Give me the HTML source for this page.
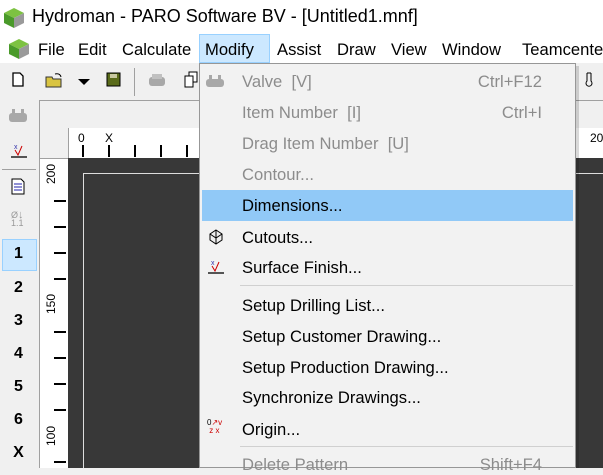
<!DOCTYPE html>
<html><head><style>
*{margin:0;padding:0;box-sizing:border-box}
body{width:603px;height:468px;overflow:hidden;background:#f0f0f0;font-family:"Liberation Sans",sans-serif;position:relative}
.a{position:absolute}
.t{font-size:16.6px;color:#000;white-space:nowrap}
.mi{position:absolute;left:242px;font-size:16.6px;white-space:nowrap}
.g{color:#8c8c8c}
.sc{position:absolute;right:61px;font-size:16.6px;color:#8c8c8c}
.n{position:absolute;left:0;width:37px;text-align:center;font-weight:bold;font-size:16px}
.tk{position:absolute;width:2px;height:12px;background:#000;top:145px}
.vt{position:absolute;left:54px;width:12px;height:1.5px;background:#000}
</style></head><body>
<div class="a" style="left:0;top:0;width:603px;height:34px;background:#fff"></div>
<svg class="a" style="left:3px;top:7px" width="22" height="22" viewBox="0 0 22 22"><polygon points="11,1 21,6 11,11 1,6" fill="#7dc242"/><polygon points="1,6 11,11 11,21 1,16" fill="#4a9a2a"/><polygon points="21,6 11,11 11,21 21,16" fill="#9a9a9a"/></svg>
<div class="a t" style="left:32px;top:6px;font-size:18px">Hydroman - PARO Software BV - [Untitled1.mnf]</div>
<div class="a" style="left:0;top:34px;width:603px;height:29px;background:#fff"></div>
<svg class="a" style="left:8px;top:38px" width="22" height="22" viewBox="0 0 22 22"><polygon points="11,1 21,6 11,11 1,6" fill="#7dc242"/><polygon points="1,6 11,11 11,21 1,16" fill="#4a9a2a"/><polygon points="21,6 11,11 11,21 21,16" fill="#9a9a9a"/></svg>
<div class="a" style="left:199px;top:34px;width:71px;height:29px;background:#cce8ff;border:1px solid #99d1ff"></div>
<div class="a t" style="left:38px;top:40px">File</div>
<div class="a t" style="left:78px;top:40px">Edit</div>
<div class="a t" style="left:122px;top:40px">Calculate</div>
<div class="a t" style="left:205px;top:40px">Modify</div>
<div class="a t" style="left:277px;top:40px">Assist</div>
<div class="a t" style="left:337px;top:40px">Draw</div>
<div class="a t" style="left:391px;top:40px">View</div>
<div class="a t" style="left:442px;top:40px">Window</div>
<div class="a t" style="left:522px;top:40px">Teamcenter</div>
<!-- toolbar -->
<svg class="a" style="left:12px;top:72px" width="12" height="15"><path d="M1 1h7l3 3v10H1z" fill="#fff" stroke="#000" stroke-width="1.3"/></svg>
<svg class="a" style="left:45px;top:72px" width="20" height="16"><path d="M1 5h6l1 2h8v8H1z" fill="#d9c441" stroke="#333"/><path d="M10 2q5-1 6 3" stroke="#000" fill="none"/></svg>
<svg class="a" style="left:78px;top:79px" width="12" height="7"><path d="M0 0h12L6 6z" fill="#000"/></svg>
<svg class="a" style="left:106px;top:72px" width="15" height="15"><rect x="1" y="1" width="13" height="13" fill="#5a6b1a" stroke="#000"/><rect x="4" y="2" width="7" height="4" fill="#c8c8a0"/></svg>
<div class="a" style="left:134px;top:68px;width:1px;height:28px;background:#a0a0a0"></div>
<svg class="a" style="left:148px;top:73px" width="18" height="14"><rect x="1" y="4" width="16" height="9" rx="3" fill="#a8a8a8"/><rect x="4" y="1" width="10" height="5" fill="#c0c0c0"/></svg>
<svg class="a" style="left:184px;top:71px" width="14" height="17"><rect x="5" y="1" width="8" height="10" fill="#fff" stroke="#000"/><rect x="1" y="5" width="8" height="11" fill="#fff" stroke="#000"/></svg>
<div class="a" style="left:39px;top:100px;width:564px;height:28px;border-top:1px solid #a0a0a0;border-left:1px solid #a0a0a0;background:#f0f0f0"></div>
<svg class="a" style="left:8px;top:108px" width="20" height="16"><rect x="1" y="5" width="18" height="9" rx="3" fill="#a8a8a8"/><rect x="4" y="1" width="3" height="5" fill="#a8a8a8"/><rect x="13" y="1" width="3" height="5" fill="#a8a8a8"/></svg>
<!-- left toolbar -->
<svg class="a" style="left:10px;top:142px" width="18" height="18"><text x="4" y="7" font-size="7" fill="#3333aa" font-family="Liberation Sans">x</text><path d="M5 8l3 5 4-9" stroke="#c00" fill="none"/><rect x="1" y="14" width="16" height="2" fill="#555"/></svg>
<div class="a" style="left:2px;top:169px;width:34px;height:1px;background:#a0a0a0"></div>
<svg class="a" style="left:11px;top:178px" width="14" height="17"><path d="M1 1h9l3 3v12H1z" fill="#fff" stroke="#000"/><path d="M3 6h8M3 9h8M3 12h8" stroke="#22a"/></svg>
<div class="a" style="left:11px;top:211px;font-size:9px;color:#999;line-height:8px">Ø<span style="font-size:11px">↓</span><br>1.1</div>
<div class="a" style="left:2px;top:239px;width:35px;height:32px;background:#cce8ff;border:1px solid #99d1ff"></div>
<div class="n" style="top:245px">1</div>
<div class="n" style="top:279px">2</div>
<div class="n" style="top:312px">3</div>
<div class="n" style="top:345px">4</div>
<div class="n" style="top:378px">5</div>
<div class="n" style="top:411px">6</div>
<div class="n" style="top:444px">X</div>
<!-- rulers -->
<div class="a" style="left:39px;top:128px;width:1px;height:340px;background:#a0a0a0"></div>
<div class="a" style="left:68px;top:128px;width:535px;height:30px;background:#fff;border-left:1px solid #a0a0a0"></div>
<div class="a" style="left:40px;top:158px;width:28px;height:310px;background:#fff;border-top:1px solid #a0a0a0"></div>
<div class="a" style="left:78px;top:131px;font-size:12px">0</div>
<div class="a" style="left:105px;top:131px;font-size:12px">X</div>
<div class="tk" style="left:82px"></div><div class="tk" style="left:108px"></div><div class="tk" style="left:134px"></div><div class="tk" style="left:160px"></div><div class="tk" style="left:186px"></div>
<div class="a" style="left:590px;top:131px;font-size:12px">20</div>
<div class="vt" style="top:200px"></div><div class="vt" style="top:226px"></div><div class="vt" style="top:252px"></div><div class="vt" style="top:278px"></div><div class="vt" style="top:331px"></div><div class="vt" style="top:357px"></div><div class="vt" style="top:383px"></div><div class="vt" style="top:409px"></div><div class="vt" style="top:461px"></div>
<div class="a" style="left:44px;font-size:12px;transform:rotate(-90deg);transform-origin:left top;top:184px">200</div>
<div class="a" style="left:44px;top:314px;font-size:12px;transform:rotate(-90deg);transform-origin:left top">150</div>
<div class="a" style="left:44px;top:446px;font-size:12px;transform:rotate(-90deg);transform-origin:left top">100</div>
<div class="a" style="left:68px;top:158px;width:535px;height:310px;background:#383838"></div>
<div class="a" style="left:83px;top:173px;width:520px;height:295px;border-left:1.5px solid #ddd;border-top:1.5px solid #ddd"></div>
<!-- dropdown -->
<div class="a" style="left:202px;top:66px;width:377px;height:402px;background:rgba(0,0,0,0.15)"></div>
<div class="a" style="left:199px;top:63px;width:377px;height:405px;background:#f2f2f2;border:1px solid #979797"></div>
<div class="a" style="left:202px;top:190px;width:371px;height:31px;background:#91c9f7"></div>
<svg class="a" style="left:206px;top:75px" width="18" height="14"><rect x="0" y="4" width="18" height="8" rx="3" fill="#a8a8a8"/><rect x="3" y="0" width="3" height="5" fill="#a8a8a8"/><rect x="12" y="0" width="3" height="5" fill="#a8a8a8"/></svg>
<div class="mi g" style="top:72px">Valve&nbsp; [V]</div><div class="sc" style="top:72px">Ctrl+F12</div>
<div class="mi g" style="top:103px">Item Number&nbsp; [I]</div><div class="sc" style="top:103px">Ctrl+I</div>
<div class="mi g" style="top:134px">Drag Item Number&nbsp; [U]</div>
<div class="mi g" style="top:165px">Contour...</div>
<div class="mi" style="top:196px">Dimensions...</div>
<svg class="a" style="left:209px;top:229px" width="14" height="16"><path d="M7 1l6 4v6l-6 4-6-4V5z" fill="#eee" stroke="#000"/><path d="M7 1v14M1 5l6 4 6-4" stroke="#000" fill="none"/></svg>
<div class="mi" style="top:228px">Cutouts...</div>
<svg class="a" style="left:207px;top:258px" width="18" height="18"><text x="4" y="7" font-size="7" fill="#3333aa" font-family="Liberation Sans">x</text><path d="M5 8l3 5 4-9" stroke="#c00" fill="none"/><rect x="1" y="14" width="16" height="2" fill="#555"/></svg>
<div class="mi" style="top:258px">Surface Finish...</div>
<div class="a" style="left:240px;top:285px;width:333px;height:1px;background:#d0d0d0"></div>
<div class="mi" style="top:296px">Setup Drilling List...</div>
<div class="mi" style="top:327px">Setup Customer Drawing...</div>
<div class="mi" style="top:358px">Setup Production Drawing...</div>
<div class="mi" style="top:388px">Synchronize Drawings...</div>
<div class="a" style="left:207px;top:419px;font-size:8px;color:#000;line-height:8px">0<span style="color:#c00">↗v</span><br>&nbsp;<span style="color:#c00">z&nbsp;x</span></div>
<div class="mi" style="top:420px">Origin...</div>
<div class="a" style="left:240px;top:446px;width:333px;height:1px;background:#d0d0d0"></div>
<div class="mi g" style="top:455px">Delete Pattern</div><div class="sc" style="top:455px">Shift+F4</div>
<svg class="a" style="left:584px;top:71px" width="10" height="18"><path d="M3 2h4M3 2v8a3 3 0 1 0 4 0V2" stroke="#000" fill="none"/></svg>
</body></html>
